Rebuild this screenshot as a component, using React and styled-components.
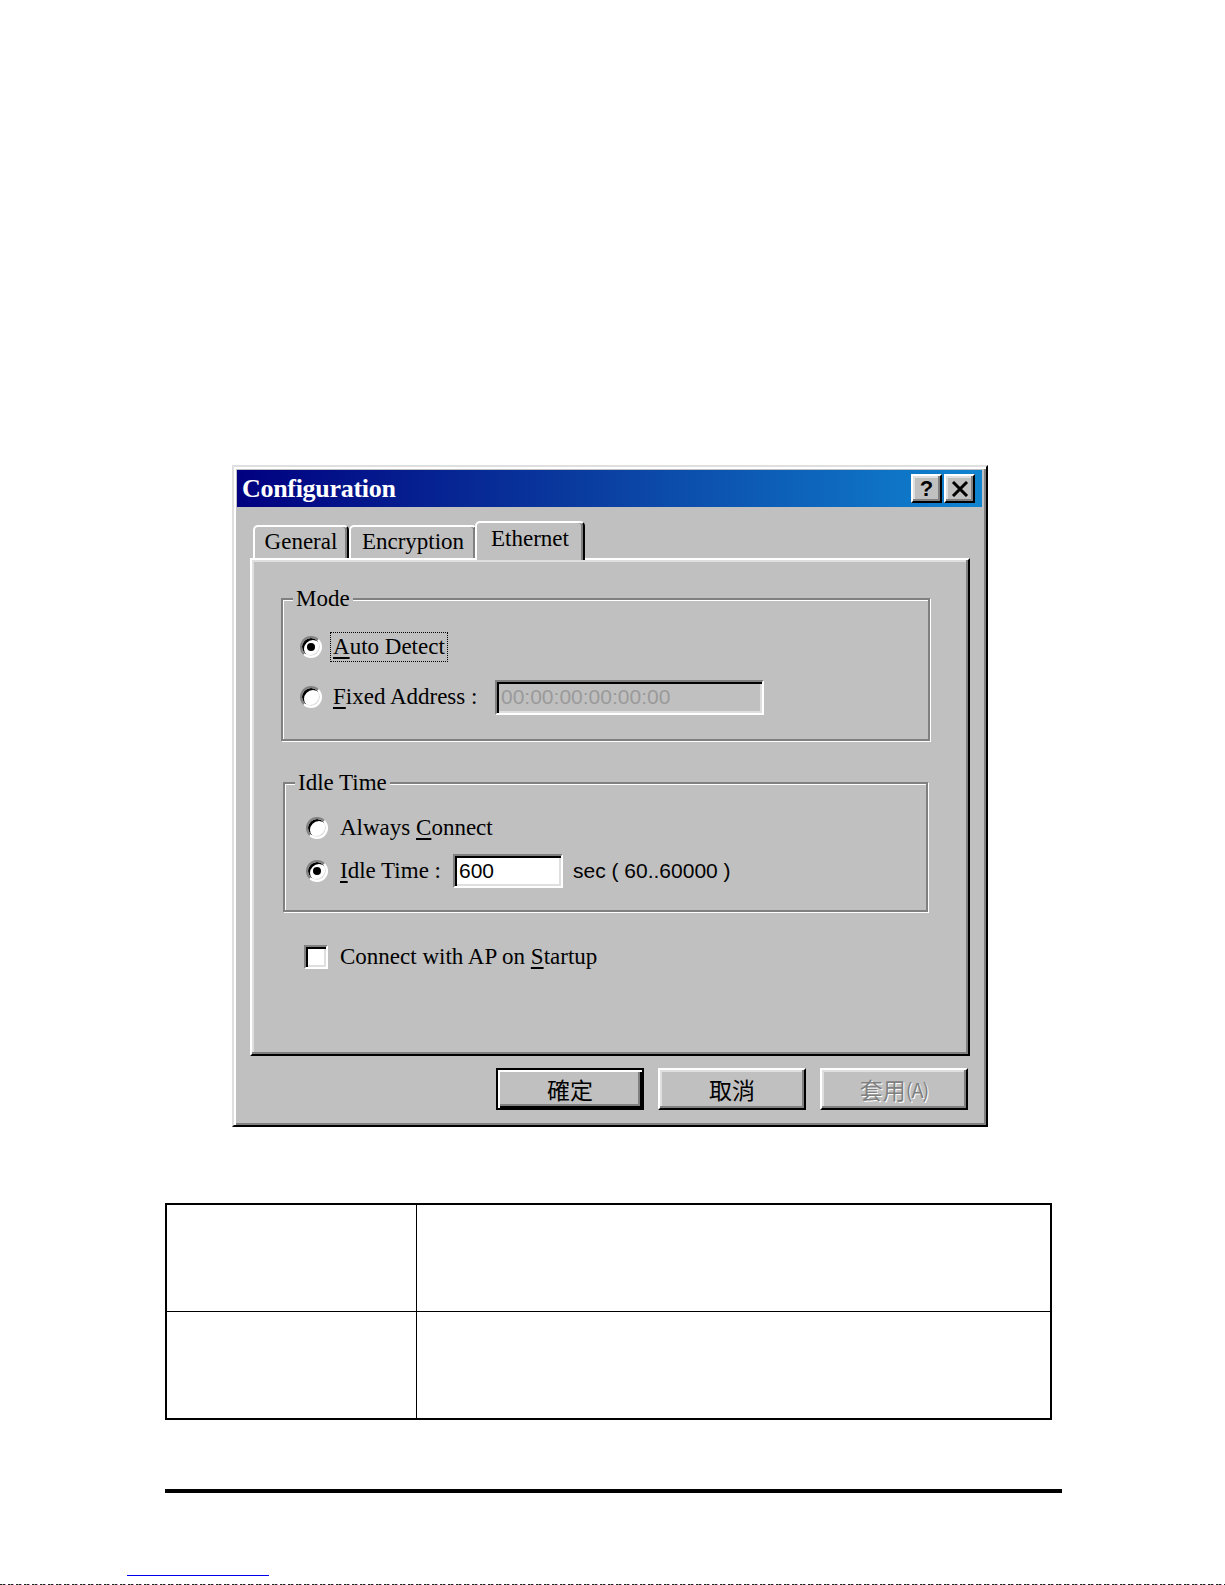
import React from "react";
import styled, { createGlobalStyle, css } from "styled-components";

const GlobalStyle = createGlobalStyle`
  html, body { margin: 0; padding: 0; background: #fff; }
  body { font-family: "Liberation Serif", "Noto Sans CJK TC", serif; }
`;

const Page = styled.div`
  width: 1225px;
  height: 1585px;
  overflow: hidden;
  padding-top: 465px;
  box-sizing: border-box;
  background: #fff;
`;

const Dialog = styled.div`
  margin-left: 232px;
  width: 756px;
  height: 662px;
  box-sizing: border-box;
  background: #c0c0c0;
  border: 2px solid;
  border-color: #dfdfdf #000 #000 #dfdfdf;
  box-shadow: inset 2px 2px 0 #fff, inset -2px -2px 0 #808080;
  padding: 3px 4px 0 3px;
`;

const TitleBar = styled.div`
  height: 37px;
  display: flex;
  align-items: center;
  justify-content: space-between;
  padding: 0 7px 0 5px;
  background: linear-gradient(90deg, #000080 0%, #0a3a9e 45%, #1084d0 100%);
`;

const Title = styled.span`
  color: #fff;
  font-family: "Liberation Serif", serif;
  font-weight: bold;
  font-size: 26px;
  letter-spacing: -0.3px;
`;

const TitleButtons = styled.div`
  display: flex;
  gap: 2px;
`;

const raised = css`
  background: #c0c0c0;
  border: 2px solid;
  border-color: #fff #000 #000 #fff;
  box-shadow: inset -2px -2px 0 #808080, inset 2px 2px 0 #dfdfdf;
  box-sizing: border-box;
`;

const CapButton = styled.div`
  ${raised};
  width: 31px;
  height: 29px;
  display: flex;
  align-items: center;
  justify-content: center;
  font-family: "Liberation Sans", sans-serif;
  font-weight: bold;
  font-size: 22px;
  color: #000;
  line-height: 1;
`;

const Body = styled.div`
  padding: 0 12px 0 13px;
`;

const TabRow = styled.div`
  height: 51px;
  display: flex;
  align-items: flex-end;
  padding-left: 3px;
`;

const Tab = styled.div`
  box-sizing: border-box;
  width: ${(p) => p.$w}px;
  height: ${(p) => (p.$active ? 39 : 33)}px;
  margin-bottom: ${(p) => (p.$active ? -2 : 0)}px;
  margin-left: ${(p) => (p.$active ? -2 : 0)}px;
  position: relative;
  z-index: ${(p) => (p.$active ? 2 : 1)};
  background: #c0c0c0;
  border: 2px solid;
  border-bottom: none;
  border-color: #fff #000 transparent #fff;
  border-radius: 5px 5px 0 0;
  box-shadow: inset -2px 0 0 #808080;
  display: flex;
  justify-content: center;
  padding-top: ${(p) => (p.$active ? 3 : 2)}px;
  font-size: 23px;
  line-height: 26px;
  color: #000;
`;

const Panel = styled.div`
  box-sizing: border-box;
  width: 720px;
  height: 498px;
  border: 2px solid;
  border-color: #fff #000 #000 #fff;
  box-shadow: inset -2px -2px 0 #808080, inset 2px 2px 0 #dfdfdf;
  display: flex;
  flex-direction: column;
  align-items: flex-start;
`;

const Group = styled.fieldset`
  box-sizing: border-box;
  margin: ${(p) => p.$top}px 0 0 ${(p) => p.$left}px;
  width: ${(p) => p.$w}px;
  padding: 0;
  min-width: 0;
  border: 2px solid #808080;
  box-shadow: inset 1px 1px 0 #fff, 1px 1px 0 #fff;
`;

const Legend = styled.legend`
  margin-left: 10px;
  padding: 0 3px;
  background: #c0c0c0;
  font-size: 23px;
  line-height: 24px;
  color: #000;
`;

const GroupBody = styled.div`
  padding: 11px 0 ${(p) => p.$bottom}px ${(p) => p.$left}px;
`;

const Row = styled.div`
  height: ${(p) => p.$h}px;
  display: flex;
  align-items: center;
`;

const Radio = styled.span`
  flex: none;
  position: relative;
  width: 22px;
  height: 22px;
  box-sizing: border-box;
  border-radius: 50%;
  background: #fff;
  border: 2px solid;
  border-color: #808080 #fff #fff #808080;
  box-shadow: inset 2px 2px 0 #000, inset -1px -1px 0 #dfdfdf;
  ${(p) =>
    p.$checked &&
    css`
      &::after {
        content: "";
        position: absolute;
        left: 5px;
        top: 5px;
        width: 8px;
        height: 8px;
        border-radius: 50%;
        background: #000;
      }
    `}
`;

const Check = styled.span`
  flex: none;
  width: 24px;
  height: 24px;
  box-sizing: border-box;
  background: #fff;
  border: 2px solid;
  border-color: #808080 #fff #fff #808080;
  box-shadow: inset 2px 2px 0 #000, inset -2px -2px 0 #dfdfdf;
`;

const Label = styled.span`
  flex: none;
  margin-left: ${(p) => p.$gap ?? 11}px;
  ${(p) => p.$w && `width: ${p.$w}px;`}
  font-size: 23px;
  line-height: 26px;
  color: #000;
  white-space: nowrap;
  ${(p) =>
    p.$focus &&
    css`
      margin-left: ${(p.$gap ?? 11) - 3}px;
      padding: 1px 2px;
      border: 1px dotted #000;
    `}
`;

const Key = styled.span`
  text-decoration: underline;
  text-underline-offset: 3px;
`;

const Field = styled.div`
  flex: none;
  box-sizing: border-box;
  width: ${(p) => p.$w}px;
  height: ${(p) => p.$h}px;
  background: ${(p) => (p.$disabled ? "#c0c0c0" : "#fff")};
  border: 2px solid;
  border-color: #808080 #fff #fff #808080;
  box-shadow: inset 2px 2px 0 #000, inset -2px -2px 0 #dfdfdf;
  display: flex;
  align-items: center;
  padding-left: 4px;
  font-family: "Liberation Sans", sans-serif;
  font-size: 21px;
  color: ${(p) => (p.$disabled ? "#9a9a9a" : "#000")};
`;

const Hint = styled.span`
  margin-left: 10px;
  font-family: "Liberation Sans", sans-serif;
  font-size: 21px;
  color: #000;
  white-space: pre;
`;

const CheckRow = styled.div`
  margin: 25px 0 0 52px;
  height: 40px;
  display: flex;
  align-items: center;
`;

const ButtonRow = styled.div`
  width: 720px;
  margin-top: 12px;
  display: flex;
  justify-content: flex-end;
  gap: 14px;
  padding-right: 2px;
  box-sizing: border-box;
`;

const Button = styled.div`
  ${raised};
  width: 148px;
  height: 42px;
  display: flex;
  align-items: center;
  justify-content: center;
  font-family: "Noto Sans CJK TC", "Liberation Sans", sans-serif;
  font-size: 23px;
  color: ${(p) => (p.$disabled ? "#808080" : "#000")};
  ${(p) => p.$disabled && "text-shadow: 1px 1px 0 #fff;"}
  ${(p) =>
    p.$default &&
    css`
      border-color: #000;
      box-shadow: inset 2px 2px 0 #fff, inset -2px -2px 0 #000,
        inset -4px -4px 0 #808080;
    `}
`;

const Small = styled.span`
  font-size: 20px;
  letter-spacing: -1px;
`;

const Table = styled.div`
  margin: 76px 0 0 165px;
  width: 887px;
  height: 217px;
  box-sizing: border-box;
  border: 2px solid #000;
  display: grid;
  grid-template-columns: 250px 1fr;
  grid-template-rows: 107px 1fr;
`;

const Cell = styled.div`
  ${(p) => p.$right && "border-right: 1px solid #000;"}
  ${(p) => p.$bottom && "border-bottom: 1px solid #000;"}
`;

const Rule = styled.div`
  margin: 69px 0 0 165px;
  width: 897px;
  height: 4px;
  background: #000;
`;

const LinkLine = styled.div`
  margin: 82px 0 0 127px;
  width: 142px;
  height: 1px;
  background: #0000ee;
`;

const DotLine = styled.div`
  margin-top: 8px;
  width: 1225px;
  height: 1px;
  background: repeating-linear-gradient(
    90deg,
    #222 0 2px,
    #8a8 2px 3px,
    #222 3px 5px,
    #c8c 5px 6px,
    transparent 6px 8px
  );
`;

function CloseIcon() {
  return (
    <svg width="18" height="16" viewBox="0 0 18 16">
      <path d="M2 1 L16 15 M16 1 L2 15" stroke="#000" strokeWidth="3" />
    </svg>
  );
}

export default function App() {
  return (
    <>
      <GlobalStyle />
      <Page>
        <Dialog>
          <TitleBar>
            <Title>Configuration</Title>
            <TitleButtons>
              <CapButton>?</CapButton>
              <CapButton>
                <CloseIcon />
              </CapButton>
            </TitleButtons>
          </TitleBar>
          <Body>
            <TabRow>
              <Tab $w={96}>General</Tab>
              <Tab $w={128}>Encryption</Tab>
              <Tab $w={110} $active>
                Ethernet
              </Tab>
            </TabRow>
            <Panel>
              <Group $top={27} $left={29} $w={649}>
                <Legend>Mode</Legend>
                <GroupBody $left={17} $bottom={17}>
                  <Row $h={50}>
                    <Radio $checked />
                    <Label $focus>
                      <Key>A</Key>uto Detect
                    </Label>
                  </Row>
                  <Row $h={50}>
                    <Radio />
                    <Label $w={162}>
                      <Key>F</Key>ixed Address :
                    </Label>
                    <Field $w={269} $h={35} $disabled>
                      00:00:00:00:00:00
                    </Field>
                  </Row>
                </GroupBody>
              </Group>
              <Group $top={30} $left={31} $w={645}>
                <Legend>Idle Time</Legend>
                <GroupBody $left={21} $bottom={18}>
                  <Row $h={43}>
                    <Radio />
                    <Label $gap={12}>
                      Always <Key>C</Key>onnect
                    </Label>
                  </Row>
                  <Row $h={43}>
                    <Radio $checked />
                    <Label $gap={12} $w={113}>
                      <Key>I</Key>dle Time :
                    </Label>
                    <Field $w={110} $h={34}>
                      600
                    </Field>
                    <Hint>sec ( 60..60000 )</Hint>
                  </Row>
                </GroupBody>
              </Group>
              <CheckRow>
                <Check />
                <Label $gap={12}>
                  Connect with AP on <Key>S</Key>tartup
                </Label>
              </CheckRow>
            </Panel>
            <ButtonRow>
              <Button $default>確定</Button>
              <Button>取消</Button>
              <Button $disabled>
                套用<Small>(A)</Small>
              </Button>
            </ButtonRow>
          </Body>
        </Dialog>
        <Table>
          <Cell $right $bottom />
          <Cell $bottom />
          <Cell $right />
          <Cell />
        </Table>
        <Rule />
        <LinkLine />
        <DotLine />
      </Page>
    </>
  );
}
